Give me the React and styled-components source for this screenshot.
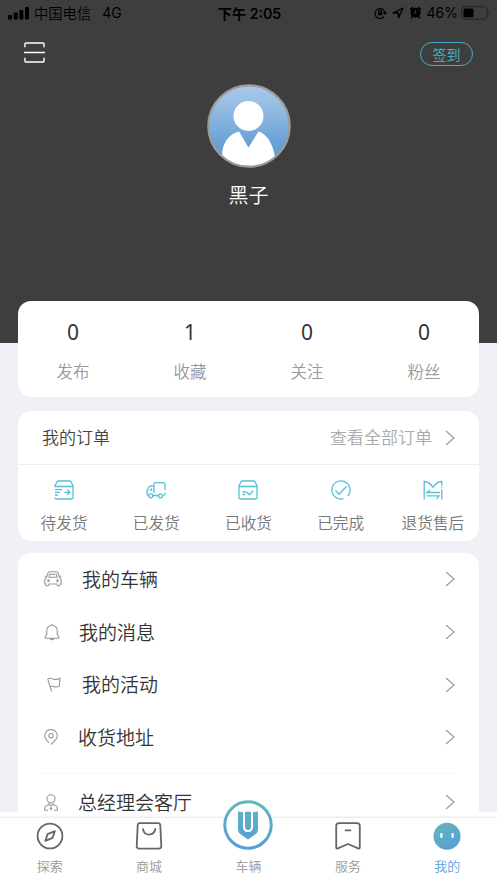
import React from 'react';
import styled, { createGlobalStyle } from 'styled-components';

const stats = [
  { label: '发布', value: 0 },
  { label: '收藏', value: 1 },
  { label: '关注', value: 0 },
  { label: '粉丝', value: 0 },
];

const PackageOutIcon = () => (
  <OrderSvg viewBox="0 0 20 20">
    <path d="M1 7V6l2-4.200C3.200 1.300 3.500 1 4.200 1h11.600c.7 0 1 .3 1.200.8L19 6v11.500c0 .9-.6 1.500-1.500 1.500h-15C1.600 19 1 18.400 1 17.500M1 6.500h18M1 9.700h7M1 12.300h5M1 15h3M10.500 12.300h5M13.300 9.800l2.500 2.500-2.500 2.500" />
  </OrderSvg>
);

const TruckIcon = () => (
  <OrderSvg viewBox="0 0 20 20">
    <path d="M8 13V4.500C8 3.200 8.500 2.700 9.500 2.700h8c1 0 1.500.5 1.500 1.500V10M19 12.500V14c0 1-.6 1.500-1.500 1.500M12 15.500H6.800M8 5.800H4.800C3.800 5.800 3.300 6.300 2.800 7.200L1 11v3c0 1 .5 1.500 1.400 1.500M3.500 10.200H5.500V8.200" />
    <circle cx="4.800" cy="15.800" r="2" />
    <circle cx="14.500" cy="15.800" r="2" />
  </OrderSvg>
);

const PackageInIcon = () => (
  <OrderSvg viewBox="0 0 20 20">
    <path d="M1 6l2-4.200C3.200 1.300 3.500 1 4.200 1h11.600c.7 0 1 .3 1.200.8L19 6v11.500c0 .9-.6 1.500-1.500 1.500h-15C1.600 19 1 18.400 1 17.500zM1 6.500h18M4.500 12h4M4.500 14.500h2.500M8.800 12.300l2.500 2.500 4-4" />
  </OrderSvg>
);

const DoneIcon = () => (
  <OrderSvg viewBox="0 0 20 20">
    <path d="M12.500 18.700A9.100 9.100 0 1 1 16.800 16M4.500 10.500l3.500 3.800L15.500 6.500" />
  </OrderSvg>
);

const ReturnIcon = () => (
  <OrderSvg viewBox="0 0 20 20">
    <path d="M1.200 19.500V1.500c3.300 0 6.300 1.800 8.800 6 2.500-4.200 5.500-6 8.800-6V5.500M18.800 6.500v1.200M18.800 9.200v10.300M17 12.500H4l3-2.500M3.500 15.800H16l-2.500 3" />
  </OrderSvg>
);

const orders = [
  { label: '待发货', icon: <PackageOutIcon /> },
  { label: '已发货', icon: <TruckIcon /> },
  { label: '已收货', icon: <PackageInIcon /> },
  { label: '已完成', icon: <DoneIcon /> },
  { label: '退货售后', icon: <ReturnIcon /> },
];

const CarIcon = () => (
  <MenuSvg width="18" height="16" viewBox="0 0 18 16">
    <path d="M2.500 6.500L3.800 2.300C4.100 1.200 4.800.7 5.800.7h6.400c1 0 1.700.5 2 1.600l1.300 4.200c1 .5 1.700 1.500 1.700 2.800V13h-.9c0 2.600-3.300 2.600-3.300 0H5c0 2.600-3.300 2.600-3.300 0H.8V9.300c0-1.300.7-2.300 1.700-2.800zM5 6.300l.6-3.100h6.800l.6 3.100zM.5 5.300h1.600M15.900 5.300h1.600" />
    <circle cx="4.500" cy="9.700" r=".8" />
    <circle cx="13.500" cy="9.700" r=".8" />
  </MenuSvg>
);

const BellIcon = () => (
  <MenuSvg width="16" height="17" viewBox="0 0 16 17">
    <path d="M7 1.500c0-1 2-1 2 0 2.600.6 4.200 2.600 4.200 5.300v3.500l1.800 2.700c.4.700.1 1.200-.6 1.200H1.600c-.7 0-1-.5-.6-1.200l1.800-2.700V6.800C2.800 4.100 4.400 2.100 7 1.500zM6 14.500c.5 1.500 3.500 1.500 4 0" />
  </MenuSvg>
);

const FlagIcon = () => (
  <MenuSvg width="14" height="16" viewBox="0 0 14 16">
    <path d="M.7 1.800L4.600 14.500M.7 1.800c1.800-.9 3.500-.6 5.300.1 2.200.8 4.500.7 7-.6l-.7 8c-2 1-3.800.9-5.600.2-1.400-.5-2.600-.4-3.800.1" />
  </MenuSvg>
);

const PinIcon = () => (
  <MenuSvg width="14" height="16" viewBox="0 0 14 16">
    <path d="M5 13.700L2.300 10.700C1.200 9.400.7 8.300.7 6.800a6.300 6.300 0 0 1 12.600 0c0 1.500-.5 2.600-1.600 3.900L7 15.500" />
    <circle cx="7" cy="6.700" r="2.200" />
  </MenuSvg>
);

const ManagerIcon = () => (
  <MenuSvg width="14" height="17" viewBox="0 0 14 17">
    <circle cx="7" cy="4.700" r="4" />
    <path d="M5 8.500v2L1.800 12C1 12.400.7 13 .7 14v2.300H4M9 8.500v2l3.200 1.500c.8.400 1.100 1 1.100 2v2.300H10M5 11h4M7 11v4M5.800 14L7 15.500 8.200 14" />
  </MenuSvg>
);

const menu = [
  { label: '我的车辆', icon: <CarIcon />, slot: 40 },
  { label: '我的消息', icon: <BellIcon />, slot: 37 },
  { label: '我的活动', icon: <FlagIcon />, slot: 40, inset: 5 },
  { label: '收货地址', icon: <PinIcon />, slot: 36 },
];

const ExploreIcon = () => (
  <TabSvg viewBox="0 0 28 28">
    <circle cx="14" cy="14" r="12.400" />
    <path d="M18.800 9.200l-2.200 6.600-7.200 3 2.200-6.700z" />
  </TabSvg>
);

const ShopIcon = () => (
  <TabSvg viewBox="0 0 28 28">
    <path d="M4.500 1.200h18.500c1.300 0 2.200.7 2.300 2.100l1 20.700c.1 1.600-.8 2.600-2.400 2.600H4.100c-1.600 0-2.500-1-2.400-2.600l1-20.700c.1-1.400.8-2.100 1.800-2.100zM7.800 6.300c1.500 8.400 11 8.400 12.800 0" />
  </TabSvg>
);

const ServiceIcon = () => (
  <TabSvg viewBox="0 0 28 28">
    <path d="M5 1.200h18c1.800 0 2.800 1 2.800 2.800v21.400c0 1-.7 1.400-1.600 1L14 22 3.800 26.400c-.9.400-1.600 0-1.600-1V4c0-1.800 1-2.800 2.800-2.800zM10.800 8.300h6.400" />
  </TabSvg>
);

const MineIcon = () => (
  <svg width="28" height="28" viewBox="0 0 28 28">
    <defs>
      <linearGradient id="mine" x1="0.200" y1="0" x2="0.700" y2="1">
        <stop offset="0" stopColor="#62b6bd" />
        <stop offset="1" stopColor="#5a9dd6" />
      </linearGradient>
    </defs>
    <circle cx="14" cy="14.200" r="13.500" fill="url(#mine)" />
    <rect x="7.300" y="11" width="2.200" height="5" rx="1" fill="#fff" />
    <rect x="18.500" y="11" width="2.200" height="5" rx="1" fill="#fff" />
  </svg>
);

const VehicleLogo = () => (
  <LogoSvg width="50" height="50" viewBox="0 0 50 50">
    <defs>
      <linearGradient id="logo" gradientUnits="userSpaceOnUse" x1="25" y1="0" x2="25" y2="50">
        <stop offset="0" stopColor="#5fb7bf" />
        <stop offset="1" stopColor="#599bd5" />
      </linearGradient>
    </defs>
    <circle cx="25" cy="25" r="23.200" fill="#fff" stroke="url(#logo)" strokeWidth="3" />
    <path d="M15 11.500l5 .7V27c0 3 2 5 5 5s5-2 5-5V12.200l5-.7V29c0 2.200-.8 4-2.600 5.300L25 39.500l-7.400-5.200C15.800 33 15 31.200 15 29z" fill="url(#logo)" />
    <path d="M22 11.700h6V27c0 4-6 4-6 0z" fill="url(#logo)" />
  </LogoSvg>
);

const tabs = [
  { label: '探索', icon: <ExploreIcon /> },
  { label: '商城', icon: <ShopIcon /> },
  { label: '车辆', icon: <VehicleLogo /> },
  { label: '服务', icon: <ServiceIcon /> },
  { label: '我的', icon: <MineIcon />, active: true },
];

const Arrow = () => (
  <MenuSvg width="10" height="16" viewBox="0 0 10 16">
    <path d="M1 1l8 7-8 7" />
  </MenuSvg>
);

const MenuRow = ({ icon, label, slot, inset }) => (
  <MenuItem>
    <MenuIcon $slot={slot} $inset={inset}>{icon}</MenuIcon>
    <MenuLabel>{label}</MenuLabel>
    <Arrow />
  </MenuItem>
);

const StatusBar = () => (
  <Status>
    <StatusGroup>
      <svg width="22" height="14" viewBox="0 0 22 14">
        <rect x="0" y="9" width="4" height="4.500" rx="1" />
        <rect x="5.700" y="6.500" width="4" height="7" rx="1" />
        <rect x="11.300" y="4" width="4" height="9.500" rx="1" />
        <rect x="17" y="1" width="4" height="12.500" rx="1" />
      </svg>
      <Carrier>中国电信</Carrier>
      <Network>4G</Network>
    </StatusGroup>
    <Clock>下午 2:05</Clock>
    <StatusIcons>
      <svg width="13" height="12" viewBox="0 0 13 12" fill="none" stroke="#000" strokeWidth="1.200">
        <path d="M10 9.700A5 5 0 1 1 11 6M9.300 5.200l1.700 1.600 1.500-1.600" />
        <rect x="4" y="5.300" width="4.200" height="3" fill="#000" stroke="none" />
        <path d="M4.900 5.500V4.200a1.200 1.200 0 0 1 2.400 0v1.300" />
      </svg>
      <svg width="12" height="12" viewBox="0 0 12 12" fill="none" stroke="#000" strokeWidth="1.300" strokeLinejoin="round">
        <path d="M1 6L11 1 6.500 11V6z" />
      </svg>
      <svg width="13" height="13" viewBox="0 0 13 13">
        <circle cx="6.500" cy="6.800" r="5" />
        <path d="M1.200 3.800L4 1.200M9 1.200l2.800 2.600M3 10.800L2 12.200M10 10.800l1 1.400" stroke="#000" strokeWidth="1.600" />
        <path d="M6.700 3.800v3.300H4.200" stroke="#3e3e3e" fill="none" />
      </svg>
      <Percent>46%</Percent>
      <svg width="30" height="14" viewBox="0 0 30 14">
        <rect x=".7" y=".7" width="25.600" height="12.400" rx="3.500" fill="none" stroke="#232323" />
        <rect x="2.500" y="2.500" width="10" height="8.800" rx="1.500" />
        <path d="M27.700 5c1.300.3 1.300 3.700 0 4z" fill="#232323" />
      </svg>
    </StatusIcons>
  </Status>
);

const App = () => (
  <Screen>
    <GlobalStyle />
    <Header>
      <StatusBar />
      <Actions>
        <svg width="21" height="21" viewBox="0 0 22 22" fill="none" stroke="#fff" strokeWidth="1.500">
          <path d="M1 5.500V2.200C1 1.400 1.400 1 2.200 1h17.600c.8 0 1.200.4 1.200 1.200v3.300M0 11h22M1 16.500v3.300c0 .8.400 1.200 1.200 1.200h17.600c.8 0 1.200-.4 1.200-1.200v-3.300" />
        </svg>
        <SignButton>签到</SignButton>
      </Actions>
      <Profile>
        <svg width="84" height="84" viewBox="0 0 84 84">
          <defs>
            <linearGradient id="sky" x1="0" y1="0" x2="0" y2="1">
              <stop offset="0" stopColor="#a9c9e8" />
              <stop offset="0.300" stopColor="#93bbe2" />
              <stop offset="0.750" stopColor="#659fd6" />
              <stop offset="1" stopColor="#659fd6" />
            </linearGradient>
            <clipPath id="face">
              <circle cx="42" cy="42" r="40.500" />
            </clipPath>
          </defs>
          <circle cx="42" cy="42" r="41" fill="url(#sky)" />
          <g clipPath="url(#face)" fill="#fff">
            <circle cx="41.500" cy="32" r="15" />
            <path d="M15 84V72c0-13 7-22 17-24.500L41.500 63.500 51.500 47.500C60 50 66 60 68 73v11z" />
          </g>
          <circle cx="42" cy="42" r="40.700" fill="none" stroke="#9b9b9b" strokeWidth="2.200" />
        </svg>
        <Name>黑子</Name>
      </Profile>
    </Header>

    <Main>
      <StatsCard>
        {stats.map(item => (
          <Stat key={item.label}>
            <StatValue>{item.value}</StatValue>
            <StatLabel>{item.label}</StatLabel>
          </Stat>
        ))}
      </StatsCard>

      <OrdersCard>
        <OrdersHeader>
          <OrdersTitle>我的订单</OrdersTitle>
          <AllOrders>查看全部订单</AllOrders>
          <Arrow />
        </OrdersHeader>
        <OrderGrid>
          {orders.map(item => (
            <Order key={item.label}>
              {item.icon}
              <OrderLabel>{item.label}</OrderLabel>
            </Order>
          ))}
        </OrderGrid>
      </OrdersCard>

      <MenuCard>
        {menu.map(item => (
          <MenuRow key={item.label} {...item} />
        ))}
        <Divider />
        <MenuRow label="总经理会客厅" icon={<ManagerIcon />} slot={36} />
      </MenuCard>
    </Main>

    <TabBar>
      {tabs.map(tab => (
        <Tab key={tab.label}>
          <TabIcon>{tab.icon}</TabIcon>
          <TabLabel $active={tab.active}>{tab.label}</TabLabel>
        </Tab>
      ))}
    </TabBar>
  </Screen>
);

const GlobalStyle = createGlobalStyle`
  * {
    box-sizing: border-box;
  }

  body {
    margin: 0;
    font-family: "Noto Sans CJK SC", sans-serif;
    font-weight: 350;
  }

  svg {
    display: block;
    flex-shrink: 0;
  }
`;

const Screen = styled.div`
  display: flex;
  flex-direction: column;
  width: 497px;
  height: 883px;
  overflow: hidden;
  background-color: #f1f0f6;
`;

const Header = styled.header`
  flex: none;
  height: 343px;
  background-color: #3e3e3e;
`;

const Status = styled.div`
  display: grid;
  grid-template-columns: 1fr auto 1fr;
  align-items: center;
  height: 26px;
  padding: 0 6px 1px 8px;
  color: #000;
  white-space: nowrap;
`;

const StatusGroup = styled.div`
  display: flex;
  align-items: center;
`;

const Carrier = styled.span`
  margin-left: 4px;
  font-size: 14.300px;
  line-height: 20px;
`;

const Network = styled.span`
  margin-left: 11px;
  font-family: Inter, sans-serif;
  font-size: 14px;
  font-weight: 400;
`;

const Clock = styled.span`
  font-family: Inter, "Noto Sans CJK SC", sans-serif;
  font-size: 14.200px;
  font-weight: 600;
`;

const StatusIcons = styled.div`
  display: flex;
  align-items: center;
  justify-content: flex-end;
  gap: 5px;
`;

const Percent = styled.span`
  margin-right: -2px;
  font-family: Inter, sans-serif;
  font-size: 14px;
  font-weight: 400;
`;

const Actions = styled.div`
  display: flex;
  justify-content: space-between;
  padding: 16px 24px 0;
`;

const SignButton = styled.button`
  width: 53px;
  height: 24px;
  padding: 0 0 1px;
  border: 1px solid #4aabc4;
  border-radius: 12px;
  background: transparent;
  color: #4aabc4;
  font-family: inherit;
  font-size: 14px;
  line-height: 20px;
`;

const Profile = styled.div`
  display: flex;
  flex-direction: column;
  align-items: center;
  padding-top: 18px;
`;

const Name = styled.div`
  margin-top: 12px;
  color: #fff;
  font-size: 20px;
  line-height: 29px;
`;

const Main = styled.main`
  display: flex;
  flex: none;
  flex-direction: column;
  height: 517px;
  margin-top: -42px;
  padding: 0 18px;
  overflow: hidden;
  background: linear-gradient(transparent 511px, #fff 511px);
`;

const Card = styled.section`
  flex: none;
  border-radius: 13px;
  background-color: #fff;
`;

const StatsCard = styled(Card)`
  display: grid;
  grid-template-columns: repeat(4, 117px);
  justify-content: center;
  height: 96px;
  padding-top: 17px;
`;

const Stat = styled.div`
  display: flex;
  flex-direction: column;
  align-items: center;
`;

const StatValue = styled.span`
  color: #333;
  font-family: "Noto Sans", sans-serif;
  font-size: 21px;
  font-weight: 400;
  line-height: 28px;
`;

const StatLabel = styled.span`
  margin-top: 13px;
  color: #999;
  font-size: 16.500px;
  line-height: 24px;
`;

const OrdersCard = styled(Card)`
  height: 130px;
  margin-top: 14px;
`;

const OrdersHeader = styled.div`
  display: flex;
  align-items: center;
  height: 54px;
  padding: 0 24px;
  border-bottom: 1px solid #ededf0;
`;

const OrdersTitle = styled.span`
  flex: 1;
  padding-bottom: 2px;
  color: #444;
  font-size: 17px;
  line-height: 24px;
`;

const AllOrders = styled.span`
  margin-right: 13px;
  padding-bottom: 2px;
  color: #aaa;
  font-size: 17px;
  line-height: 24px;
`;

const OrderGrid = styled.div`
  display: grid;
  grid-template-columns: repeat(5, 1fr);
  padding-top: 15px;
`;

const Order = styled.div`
  display: flex;
  flex-direction: column;
  align-items: center;
`;

const OrderLabel = styled.span`
  margin-top: 11px;
  color: #777;
  font-size: 15.700px;
  line-height: 24px;
  white-space: nowrap;
`;

const OrderSvg = styled.svg`
  width: 20px;
  height: 20px;
  fill: none;
  stroke: #56bfd8;
  stroke-width: 1.3;
`;

const MenuCard = styled(Card)`
  height: 290px;
  margin-top: 12px;
  padding: 0 24px;
`;

const MenuItem = styled.div`
  display: flex;
  align-items: center;
  height: 52.700px;
`;

const MenuIcon = styled.span`
  display: flex;
  width: ${({ $slot }) => $slot}px;
  padding-left: ${({ $inset }) => $inset || 2}px;
`;

const MenuLabel = styled.span`
  flex: 1;
  padding-bottom: 1px;
  color: #333;
  font-size: 19px;
  line-height: 18px;
`;

const MenuSvg = styled.svg`
  fill: none;
  stroke: #999;
  stroke-width: 1.1;
`;

const Divider = styled.div`
  height: 1px;
  margin: 9px -1px 2px -2px;
  background-color: #f8f8f9;
`;

const TabBar = styled.nav`
  position: relative;
  display: grid;
  flex: none;
  grid-template-columns: repeat(5, 1fr);
  height: 65px;
  padding-top: 4px;
  background-color: #fff;
  box-shadow: 0 -1px 2px rgba(0, 0, 0, 0.1);
`;

const Tab = styled.div`
  display: flex;
  flex-direction: column;
  align-items: center;
`;

const TabIcon = styled.span`
  position: relative;
  display: flex;
  justify-content: center;
  width: 28px;
  height: 28px;
`;

const TabSvg = styled.svg`
  width: 28px;
  height: 28px;
  fill: none;
  stroke: #666;
  stroke-width: 1.8;
  stroke-linejoin: round;
`;

/* sits over the top edge of the tab bar */
const LogoSvg = styled.svg`
  position: absolute;
  top: -22px;
`;

const TabLabel = styled.span`
  margin-top: 6px;
  color: ${({ $active }) => ($active ? '#5b9fd8' : '#999')};
  font-size: 13px;
  line-height: 20px;
`;

export default App;
